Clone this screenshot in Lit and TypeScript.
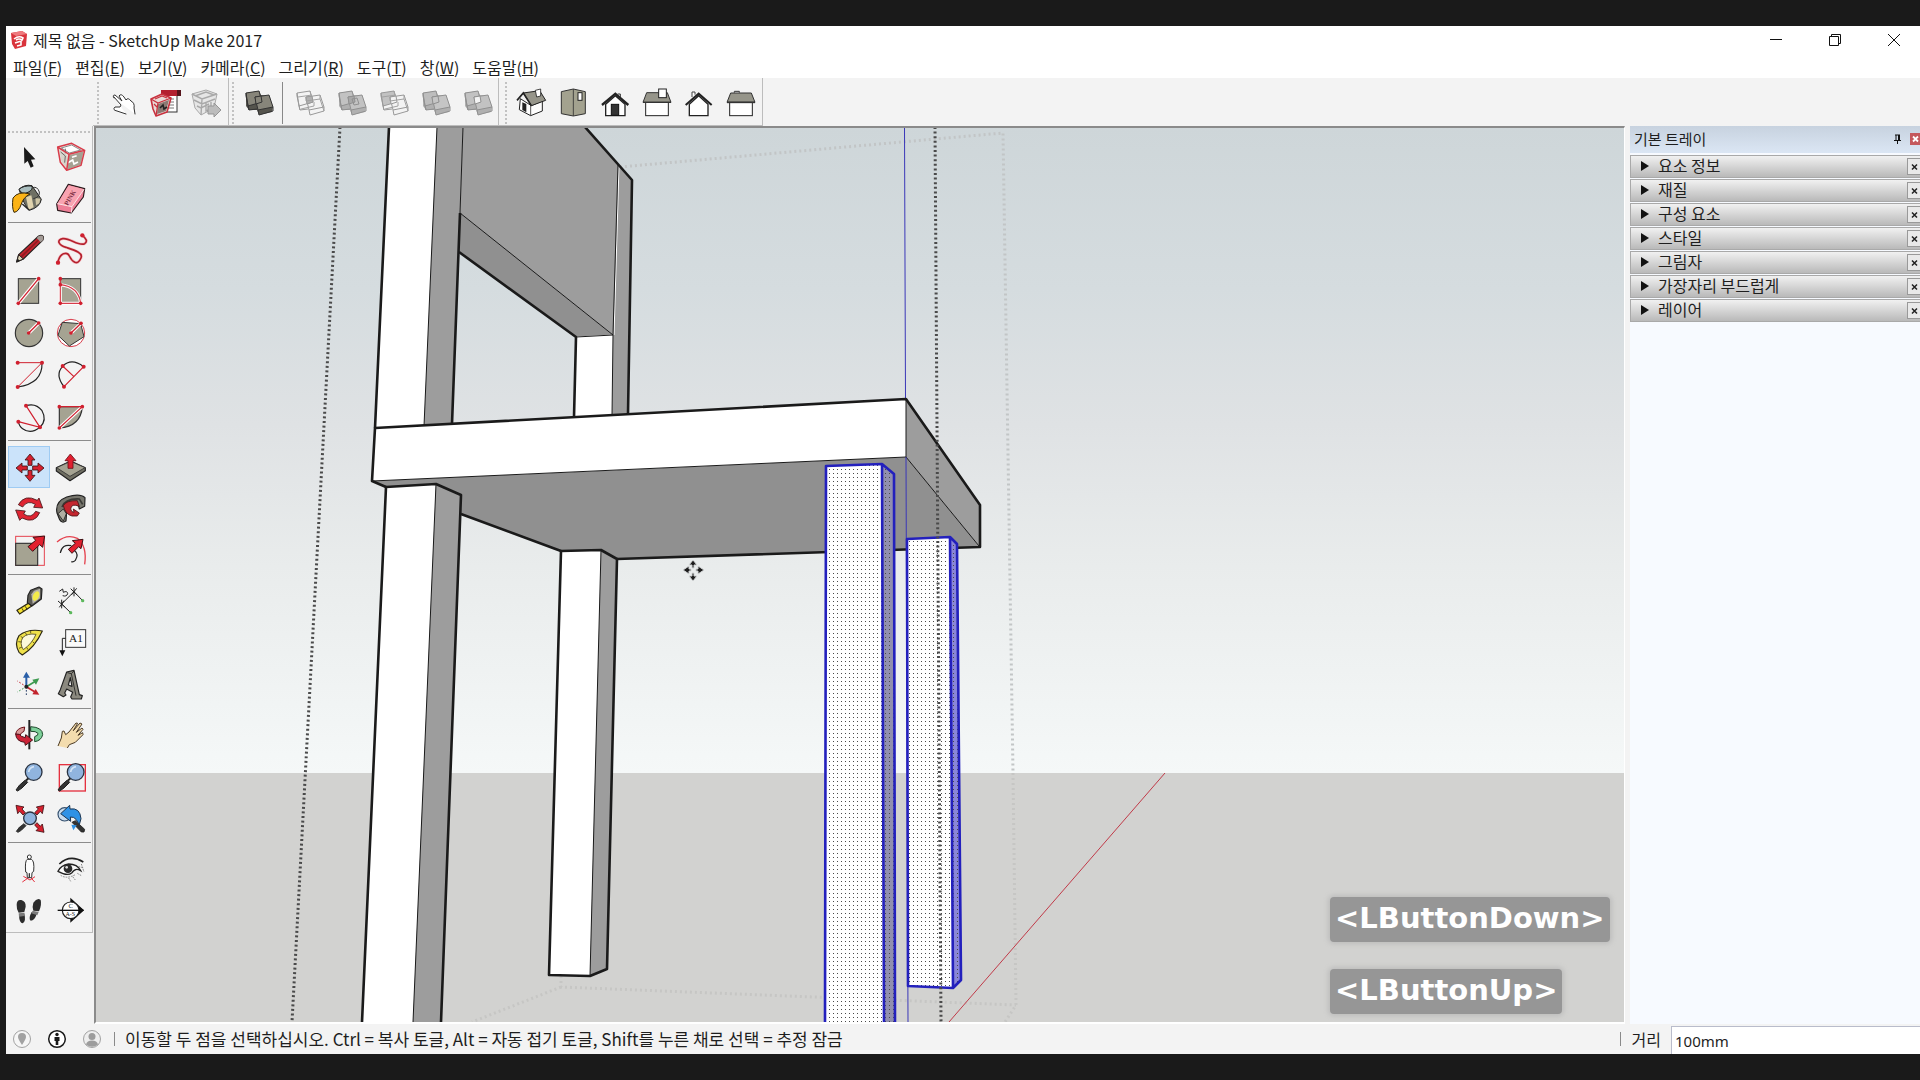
import { LitElement, html, svg, css, type SVGTemplateResult } from "lit";
import { customElement, property } from "lit/decorators.js";
import { classMap } from "lit/directives/class-map.js";

interface Tool {
  name: string;
  box: string;
  art: SVGTemplateResult;
  active?: boolean;
}

const RED = "#d0202f";

const dots = (pts: number[][], r = 5.5) =>
  pts.map(([x, y]) => svg`<circle cx=${x} cy=${y} r=${r} fill=${RED} />`);

/* Palette artwork lives on a sheet drawn at three units per pixel; each tool names its 126 unit cell. */
const palette: Tool[][] = [
  [
    {
      name: "선택", box: "24 48 126 126",
      art: svg`<path d="M72 81 L73 131 L83 123 L92 143 L101 139 L93 119 L106 118 Z" fill="#1a1a1a"/>`,
    },
    {
      name: "구성 요소 만들기", box: "150 48 126 126",
      art: svg`<path d="M173 81 L215 70 L254 91 L243 136 L200 151 L181 127 Z" fill="#ece9e6"/>
        <path d="M206 106 L251 94 L242 134 L202 149 Z" fill="#a5a193"/>
        <path d="M178 88 L203 107 L200 146 L184 124 Z" fill="#d8d4ca"/>
        <path d="M184 84 L215 75 L242 90 L208 99 Z" fill="#fff" stroke="#555" stroke-width="2"/>
        <path d="M204 128 l14 -8 l4 12 l12 -6 M216 112 l14 -5" fill="none" stroke="#fff" stroke-width="5"/>
        <path d="M182 96 L196 108 L194 128 M196 86 V100" fill="none" stroke="#555" stroke-width="2.5"/>
        <path d="M173 81 L215 70 L254 91 L243 136 L200 151 L181 127 Z M173 81 L207 103 L254 91 M207 103 L200 151" fill="none" stroke="#d83c4a" stroke-width="4.5" stroke-linejoin="round"/>`,
    },
    {
      name: "페인트 통", box: "24 174 126 126",
      art: svg`<path d="M57 208 Q74 192 96 197 L124 238 Q120 262 88 271 Q72 256 57 208 Z" fill="#6f7064" stroke="#222" stroke-width="3"/>
        <path d="M57 208 Q70 196 95 198 Q101 208 84 217 Q66 226 57 208 Z" fill="#a9bdbe" stroke="#222" stroke-width="3"/>
        <path d="M78 232 L94 226 L101 262 L86 269 Z" fill="#e0d3ae"/><path d="M106 234 L121 236 L118 250 L108 256 Z" fill="#cfc6a6"/>
        <path d="M98 203 Q112 198 118 216 Q120 232 100 236" fill="none" stroke="#333" stroke-width="3"/>
        <path d="M39 234 Q54 212 90 222 Q70 232 64 252 Q56 276 42 277 Q35 262 39 234 Z" fill="#fbb316" stroke="#3a2a08" stroke-width="3"/>
        <path d="M67 252 L88 271" stroke="#222" stroke-width="4"/>`,
    },
    {
      name: "지우개", box: "150 174 126 126",
      art: svg`<path d="M170 252 L205 193 L254 206 L250 231 L214 279 L173 271 Z" fill="#ee7f97" stroke="#2a1a1c" stroke-width="3.5" stroke-linejoin="round"/>
        <path d="M172 251 L206 196 L252 208 L216 260 Z" fill="#f9a3b1"/>
        <path d="M172 251 L216 260 L252 208 M216 260 L214 278" fill="none" stroke="#fbe3e6" stroke-width="3"/>
        <text x="188" y="244" font-size="20" font-weight="bold" fill="#7d3044" font-family="Liberation Serif, serif" transform="rotate(-60 208 238)">PINK</text>`,
    },
  ],
  [
    {
      name: "선", box: "24 324 126 126",
      art: svg`<path d="M50 426 L56 404 L116 348 Q125 344 130 350 Q131 356 128 361 L70 417 Z" fill="#c2232c" stroke="#26211f" stroke-width="3.5" stroke-linejoin="round"/>
        <path d="M64 410 L122 354" stroke="#8e1a20" stroke-width="5"/>
        <path d="M110 354 L116 348 Q126 344 130 350 Q131 356 128 361 L122 367 Z" fill="#a39b96"/>
        <path d="M50 426 L56 404 L70 417 Z" fill="#dcd2b4" stroke="#26211f" stroke-width="3"/><path d="M49 427 L53 416 L60 422 Z" fill="#222"/>`,
    },
    {
      name: "자유형", box: "150 324 126 126",
      art: svg`<path d="M247 346 Q267 362 254 371 C236 380 208 352 188 356 C168 360 176 376 198 382 C222 390 250 398 243 414 C232 440 216 424 208 408 C202 394 178 398 174 428" fill="none" stroke="#f6c9cd" stroke-width="9"/>
        <path d="M247 346 Q267 362 254 371 C236 380 208 352 188 356 C168 360 176 376 198 382 C222 390 250 398 243 414 C232 440 216 424 208 408 C202 394 178 398 174 428" fill="none" stroke="#b5202d" stroke-width="5"/>${dots([[247, 346], [174, 428]], 6.5)}`,
    },
    {
      name: "사각형", box: "24 450 126 126",
      art: svg`<rect x="55" y="476" width="61" height="74" fill="#a5a392" stroke="#333" stroke-width="3"/>
        <path d="M55 550 L116 476" stroke="#fff" stroke-width="11"/><path d="M55 550 L116 476" stroke=${RED} stroke-width="4"/>${dots([[55, 550], [116, 476]])}`,
    },
    {
      name: "회전된 사각형", box: "150 450 126 126",
      art: svg`<rect x="181" y="476" width="61" height="74" fill="#a5a392" stroke="#333" stroke-width="3"/>
        <path d="M181 494 V550 H242 Q236 500 181 494" fill="none" stroke="#fff" stroke-width="9"/>
        <path d="M181 478 V550 H242 Q236 500 181 494" fill="none" stroke="#d83c4a" stroke-width="3.5"/>${dots([[181, 476], [181, 494], [181, 550], [242, 550]])}`,
    },
    {
      name: "원", box: "24 576 126 126",
      art: svg`<circle cx="87" cy="639" r="41" fill="#a5a392" stroke="#333" stroke-width="3.5"/>
        <path d="M86 639 L116 609" stroke="#fff" stroke-width="11"/><path d="M86 639 L116 609" stroke=${RED} stroke-width="4"/>${dots([[86, 639], [116, 609]])}`,
    },
    {
      name: "다각형", box: "150 576 126 126",
      art: svg`<circle cx="213" cy="639" r="41" fill="#fff" stroke="#d83c4a" stroke-width="3"/>
        <path d="M187 607 L242 611 L252 650 L208 678 L174 646 Z" fill="#a5a392" stroke="#333" stroke-width="3"/>
        <path d="M213 639 L243 610" stroke="#fff" stroke-width="10"/><path d="M213 639 L243 610" stroke=${RED} stroke-width="4"/>${dots([[213, 639], [243, 610]])}`,
    },
    {
      name: "호", box: "24 702 126 126",
      art: svg`<path d="M126 728 Q128 790 53 801" fill="none" stroke="#222" stroke-width="3.5"/>
        <path d="M53 728 H126 L53 801" fill="none" stroke=${RED} stroke-width="3"/>${dots([[53, 728], [126, 728], [53, 801]], 6)}`,
    },
    {
      name: "두 점 호", box: "150 702 126 126",
      art: svg`<path d="M192 800 Q164 764 188 739 Q214 712 251 740" fill="none" stroke="#222" stroke-width="3.5"/>
        <path d="M192 800 L251 740 M188 738 L221 769" fill="none" stroke=${RED} stroke-width="3.5"/>${dots([[192, 800], [251, 740], [188, 738]], 6)}`,
    },
    {
      name: "세 점 호", box: "24 828 126 126",
      art: svg`<path d="M78 857 Q108 848 126 872 Q142 900 120 922 Q92 944 68 926 Q58 920 55 905" fill="none" stroke="#222" stroke-width="3.5"/>
        <path d="M78 857 L120 922 L55 905" fill="none" stroke=${RED} stroke-width="3.5"/>${dots([[78, 857], [120, 922], [55, 905]], 6)}`,
    },
    {
      name: "부채꼴", box: "150 828 126 126",
      art: svg`<path d="M178 860 H247 Q242 920 178 924 Z" fill="#a5a392" stroke="#333" stroke-width="3.5"/>
        <path d="M247 860 L178 924" stroke="#fff" stroke-width="10"/>
        <path d="M178 860 H247 L178 924" fill="none" stroke=${RED} stroke-width="3.5"/>${dots([[178, 860], [247, 860], [178, 924]])}`,
    },
  ],
  [
    {
      name: "이동", box: "24 33 126 126", active: true,
      art: svg`<path d="M90 57 L105 75 H96 V91 L84 91 V75 H75 Z M90 139 L105 121 H96 V106 H84 V121 H75 Z M48 99 L66 84 V93 H82 V105 H66 V114 Z M132 99 L114 84 V93 H98 V105 H114 V114 Z" fill="#d6202e" stroke="#3a1416" stroke-width="2.5" stroke-linejoin="round"/>`,
    },
    {
      name: "밀기/끌기", box: "150 33 126 126",
      art: svg`<path d="M169 98 L212 78 L256 98 L256 107 L210 137 L169 108 Z" fill="#6f6e62" stroke="#222" stroke-width="3.5" stroke-linejoin="round"/>
        <path d="M170 98 L212 79 L255 98 L210 124 Z" fill="#a5a392" stroke="#333" stroke-width="2.5"/>
        <path d="M211 57 L228 77 H219 V100 H204 V77 H195 Z" fill="#e01f2f" stroke="#6b1017" stroke-width="2.5"/>`,
    },
    {
      name: "회전", box: "24 159 126 126",
      art: svg`<path d="M55 209 Q74 176 112 196 L117 189 L128 219 L101 217 L106 208 Q82 194 68 216 Z" fill="#df2432" stroke="#45191c" stroke-width="2.5" stroke-linejoin="round"/>
        <path d="M119 233 Q104 268 66 249 L59 256 L47 225 L76 228 L71 237 Q94 252 107 229 Z" fill="#df2432" stroke="#45191c" stroke-width="2.5" stroke-linejoin="round"/>`,
    },
    {
      name: "따라가기", box: "150 159 126 126",
      art: svg`<path d="M171 234 Q164 200 200 186 Q240 174 255 188 L254 214 L238 222 Q236 202 214 204 Q196 210 200 232 L198 258 Q186 266 179 254 Z" fill="#77766d" stroke="#222" stroke-width="3.5" stroke-linejoin="round"/>
        <path d="M186 216 Q196 190 238 192 L248 208" fill="none" stroke="#3a3a36" stroke-width="5"/>
        <path d="M174 236 L190 222 L199 236 L190 258 Z" fill="#b0aea2" stroke="#222" stroke-width="2.5"/>
        <path d="M190 212 Q198 196 232 197 L238 214 Q214 204 212 222 Q214 232 222 232 L220 222 L238 234 L232 243 L216 243 Q196 238 190 212 Z" fill="#c4262f" stroke="#4a1215" stroke-width="2.5"/>`,
    },
    {
      name: "배율", box: "24 285 126 126",
      art: svg`<rect x="47" y="304" width="86" height="87" fill="none" stroke="#e5434f" stroke-width="3"/>
        <rect x="47" y="325" width="66" height="66" fill="#a5a392" stroke="#333" stroke-width="3.5"/>
        <path d="M134 303 L128 337 L119 329 L98 349 L84 335 L107 316 L99 307 Z" fill="#e2202f" stroke="#3d1013" stroke-width="3" stroke-linejoin="round"/>`,
    },
    {
      name: "오프셋", box: "150 285 126 126",
      art: svg`<path d="M171 321 Q200 296 232 310 Q262 334 254 388" fill="none" stroke="#e5434f" stroke-width="4"/>
        <path d="M181 354 Q186 326 214 332 M222 345 Q238 358 226 376 Q220 382 214 380" fill="none" stroke="#222" stroke-width="3.5"/>
        <path d="M249 313 L243 341 L236 335 L216 355 L205 343 L226 325 L217 317 Z" fill="#e2202f" stroke="#3d1013" stroke-width="3" stroke-linejoin="round"/>`,
    },
  ],
  [
    {
      name: "줄자", box: "24 435 126 126",
      art: svg`<path d="M51 526 L88 503 L94 514 L59 537 Z" fill="#f4e02f" stroke="#2b2712" stroke-width="3.5"/>
        <path d="M66 520 l5 9 M76 514 l5 9" stroke="#2b2712" stroke-width="2.5"/>
        <path d="M84 481 L92 466 L117 456 L126 462 L124 492 L96 513 L82 503 Z" fill="#5c5b55" stroke="#222" stroke-width="3.5" stroke-linejoin="round"/>
        <path d="M94 478 L102 467 L120 461 L120 490 L98 506 Z" fill="#b6b4aa"/>
        <ellipse cx="108" cy="483" rx="9" ry="15" fill="#f4ec4a" transform="rotate(25 108 483)"/>`,
    },
    {
      name: "치수", box: "150 435 126 126",
      art: svg`<path d="M185 507 L222 470 L248 497 M185 507 L212 533" fill="none" stroke="#222" stroke-width="3"/>
        <path d="M174 498 L196 517 M178 517 L192 497 M185 494 V520 M212 461 L231 480 M214 480 L230 460 M222 457 V484" stroke="#222" stroke-width="3"/>
        <path d="M178 469 L188 462 L190 472 Q202 466 203 476 Q200 486 188 482" fill="none" stroke="#222" stroke-width="3"/>
        <circle cx="248" cy="497" r="5" fill="#5cb85c"/><circle cx="212" cy="533" r="5" fill="#5cb85c"/>`,
    },
    {
      name: "각도기", box: "24 561 126 126",
      art: svg`<path d="M127 588 Q84 580 57 602 Q42 626 57 652 L67 660 Q104 638 127 588 Z" fill="#efe14a" stroke="#2b2712" stroke-width="3.5" stroke-linejoin="round"/>
        <path d="M108 598 Q82 594 68 608 Q58 626 70 644 Q96 626 108 598 Z" fill="#fbf8dc" stroke="#4d4620" stroke-width="2.5"/>
        <path d="M92 588 v7 M76 593 l4 7 M62 604 l7 5 M55 620 l9 1 M57 640 l9 -4 M84 644 l-4 -7 M104 626 l-6 -6" stroke="#4d4620" stroke-width="2.5"/>`,
    },
    {
      name: "텍스트", box: "150 561 126 126",
      art: svg`<rect x="197" y="584" width="60" height="53" fill="#fafafa" stroke="#333" stroke-width="3"/>
        <text x="228" y="620" font-size="34" text-anchor="middle" fill="#222" font-family="Liberation Serif, serif">A1</text>
        <path d="M197 610 H187 V650" fill="none" stroke="#222" stroke-width="3"/><path d="M178 646 H196 L187 664 Z" fill="#111"/>`,
    },
    {
      name: "축", box: "24 687 126 126",
      art: svg`<path d="M79 755 V722" stroke="#2a5fa8" stroke-width="6"/><path d="M79 710 L90 728 H69 Z" fill="#2a5fa8"/>
        <path d="M79 755 L104 740" stroke="#3d9a50" stroke-width="5"/><path d="M118 730 L108 749 L97 734 Z" fill="#3d9a50"/>
        <path d="M79 755 L104 770" stroke="#c2232c" stroke-width="5"/><path d="M118 779 L97 778 L107 762 Z" fill="#c2232c"/>
        <path d="M79 755 V785" stroke="#2a3f68" stroke-width="3" stroke-dasharray="5 5"/><path d="M79 755 L52 738" stroke="#c2232c" stroke-width="3" stroke-dasharray="5 5"/>
        <path d="M79 755 L52 771" stroke="#3d9a50" stroke-width="3" stroke-dasharray="5 5"/><circle cx="79" cy="755" r="6" fill="#222"/>`,
    },
    {
      name: "3D 텍스트", box: "150 687 126 126",
      art: svg`<path d="M175 776 L181 764 L200 711 L222 706 L238 779 L247 782 L244 792 L216 792 L212 786 L218 772 L200 762 L194 774 L198 780 L190 785 Z M205 750 L216 754 L211 728 Z" fill="#8b897f" fill-rule="evenodd" stroke="#222" stroke-width="3.5" stroke-linejoin="round"/>
        <path d="M202 713 L214 716 L228 782 M214 716 L222 708" fill="none" stroke="#222" stroke-width="2.5"/>`,
    },
  ],
  [
    {
      name: "궤도", box: "24 12 126 126",
      art: svg`<path d="M92 50 Q128 52 128 74 Q124 92 104 95 L104 80 Q116 76 114 70 Q108 63 92 64 Z" fill="#7ed09a" stroke="#1d4a2c" stroke-width="3"/>
        <path d="M72 64 L74 51 Q50 54 47 72 L60 76 Q62 68 72 64 Z" fill="#d99a9a" stroke="#6b1017" stroke-width="3"/>
        <path d="M88 30 V118" stroke="#222" stroke-width="6"/>
        <path d="M47 72 Q48 94 74 97 L76 106 L98 90 L77 74 L76 83 Q62 80 58 73 Z" fill="#cc2237" stroke="#4a1018" stroke-width="3"/>`,
    },
    {
      name: "이동 보기", box: "150 12 126 126",
      art: svg`<path d="M174 108 L184 84 L187 64 L192 63 L197 74 L207 66 L228 39 L233 40 L220 62 L240 39 L246 42 L229 67 L246 54 L249 58 L234 76 L248 68 L249 74 L226 97 L208 104 L202 114" fill="#f3dcae" stroke="#4b3a24" stroke-width="3" stroke-linejoin="round"/>`,
    },
    {
      name: "확대/축소", box: "24 138 126 126",
      art: svg`<path d="M48 240 L58 226 L76 210 L83 217 L66 234 L53 243 Z" fill="#333" stroke="#222" stroke-width="3"/>
        <path d="M78 212 L86 204" stroke="#222" stroke-width="6"/><circle cx="101" cy="186" r="25" fill="#90b4de" stroke="#2b3442" stroke-width="4"/>
        <path d="M86 186 Q88 172 102 170" fill="none" stroke="#d4e4f5" stroke-width="5"/>`,
    },
    {
      name: "확대/축소 창", box: "150 138 126 126",
      art: svg`<rect x="178" y="164" width="78" height="79" fill="none" stroke="#e5313f" stroke-width="4"/>
        <path d="M174 240 L184 226 L202 210 L209 217 L192 234 L179 243 Z" fill="#333" stroke="#222" stroke-width="3"/>
        <path d="M204 212 L212 204" stroke="#222" stroke-width="6"/><circle cx="227" cy="186" r="25" fill="#90b4de" stroke="#2b3442" stroke-width="4"/>
        <path d="M212 186 Q214 172 228 170" fill="none" stroke="#d4e4f5" stroke-width="5"/>`,
    },
    {
      name: "범위 확대/축소", box: "24 264 126 126",
      art: svg`<path d="M48 286 L72 291 L66 297 L76 308 L69 315 L59 304 L53 311 Z M132 286 L109 291 L115 297 L104 308 L111 315 L121 304 L127 311 Z M132 367 L127 342 L121 349 L111 338 L104 345 L114 356 L108 362 Z" fill="#d6202e" stroke="#3d1013" stroke-width="2.5"/>
        <path d="M49 364 L58 352 L72 341 L78 347 L64 361 L54 367 Z" fill="#333" stroke="#222" stroke-width="2.5"/>
        <circle cx="90" cy="325" r="19" fill="#90b4de" stroke="#2b3442" stroke-width="4"/>`,
    },
    {
      name: "이전 보기", box: "150 264 126 126",
      art: svg`<circle cx="194" cy="313" r="20" fill="#c9dcee" stroke="#35506e" stroke-width="3.5"/>
        <path d="M216 337 L226 332 L254 358 L252 366 L244 366 Z" fill="#333" stroke="#222" stroke-width="2.5"/>
        <path d="M182 311 L209 286 L210 297 Q240 292 243 326 L238 344 L228 328 Q222 320 211 321 L212 334 Z" fill="#2f92e6" stroke="#1d3550" stroke-width="3" stroke-linejoin="round"/>
        <path d="M214 344 L220 361 L230 346 Z" fill="#2f92e6"/>`,
    },
  ],
  [
    {
      name: "카메라 배치", box: "24 414 126 126",
      art: svg`<path d="M67 516 L90 500 L104 516 M70 499 L90 510 L105 500" fill="none" stroke="#e5313f" stroke-width="3"/>
        <path d="M82 448 Q74 452 77 486 L81 488 L82 503 H88 V490 V503 H95 L96 488 L101 484 Q104 452 94 448 Z" fill="#fdfdfd" stroke="#333" stroke-width="3"/>
        <circle cx="88" cy="441" r="6" fill="#fdfdfd" stroke="#333" stroke-width="3"/>`,
    },
    {
      name: "둘러보기", box: "150 414 126 126",
      art: svg`<path d="M178 462 Q210 432 250 456" fill="none" stroke="#222" stroke-width="5"/>
        <path d="M174 484 Q182 466 206 462 Q232 462 242 482 Q226 472 216 488 Q202 500 174 484 Z" fill="#fafafa" stroke="#222" stroke-width="4"/>
        <circle cx="204" cy="476" r="13" fill="#2a2a2a"/><circle cx="200" cy="472" r="4" fill="#ddd"/>
        <path d="M182 496 Q200 508 226 494 M206 504 L212 514 M218 500 L226 510 M232 490 L246 498 M236 470 L252 474 M244 462 l8 24" stroke="#888" stroke-width="3" fill="none" stroke-dasharray="5 3"/>`,
    },
    {
      name: "걷기", box: "24 540 126 126",
      art: svg`<path d="M50 584 Q50 568 64 570 Q78 574 77 590 L73 606 L56 608 Q49 596 50 584 Z M57 616 L73 612 Q79 634 68 640 Q58 640 57 616 Z M100 578 Q112 562 122 570 Q126 584 117 604 L100 602 Q96 590 100 578 Z M95 606 L110 612 Q104 632 92 632 Q84 626 95 606 Z" fill="#2d2d2d"/>
        <path d="M56 610 L74 608 L73 618 L57 620 Z M98 602 L116 606 L112 616 L94 610 Z" fill="#7b7b7b"/>`,
    },
    {
      name: "단면 평면", box: "150 540 126 126",
      art: svg`<path d="M211 563 L252 601 L211 638 Z" fill="#111"/><circle cx="212" cy="601" r="25" fill="#fff" stroke="#222" stroke-width="3.5"/>
        <path d="M173 601 H250" stroke="#111" stroke-width="4"/><path d="M237 590 L252 601 L237 612 Z" fill="#111"/>
        <text x="212" y="595" font-size="20" text-anchor="middle" fill="#222" font-family="Liberation Serif, serif">C</text>
        <text x="211" y="618" font-size="18" text-anchor="middle" fill="#222" font-family="Liberation Serif, serif">A-S</text>`,
    },
  ],
];

/* Two overlapping slabs; the boolean tools differ only in which part is solid. */
const slabs = (line: string, left: string, right: string, mid: string, side: string) => svg`
  <path d="M9 11 L22 9 L24 13 L32 14 L36 25 L35 30 L22 33 L20 28 L12 28 L9 24 Z" fill=${side} />
  <path d="M9 11 L22 9 L25 20 L11 24 Z" fill=${left} stroke=${line} />
  <path d="M18 15 L32 13 L36 25 L21 28 Z" fill=${right} stroke=${line} />
  <path d="M18 15 L24 14 L25 20 L19 22 Z" fill=${mid} stroke=${line} />
  <path d="M9 11 V14 L12 28 L20 27 M11 24 L12 28 M21 28 L22 33 L36 29 V25" fill="none" stroke=${line} stroke-linejoin="round" />`;

/* Wire edges of the hidden half of a slab. */
const wires = svg`<path d="M22 9 L23 13 M10 15 L24 13 M26 20 V24 L13 27 M18 15 V19 L32 17 L36 29 M32 13 V17" fill="none" stroke="#a2a2a2" />`;

const B = "0 0 42 42";

const bars: Tool[][][] = [
  [[
    {
      name: "만지기", box: B,
      art: svg`<path d="M12 16 Q10 13 13 13 L20 19 L17 14 Q19 11 22 15 L24 18 Q26 15 29 19 Q33 21 32 26 L33 32 M12 15 L19 23 L18 25 L13 25 Q10 28 15 29 L24 32" fill="#fff" stroke="#333" stroke-linecap="round" stroke-linejoin="round"/>`,
    },
    {
      name: "3D 웨어하우스", box: B,
      art: svg`<rect x="21" y="13" width="12" height="17" fill="#fff" stroke="#333"/>
        <path d="M24 17 h6 M24 20 h6 M24 23 h6 M24 26 h6" stroke="#777"/>
        <rect x="17" y="8" width="20" height="6" fill="#b3202f"/><path d="M33 8 h4 v6 h-4 z" fill="#55141b"/>
        <path d="M7 17 L18 12 L27 16 L23 30 L12 34 L9 27 Z" fill="#e8dcd8" stroke="#c8323f" stroke-width="1.6" stroke-linejoin="round"/>
        <path d="M14 22 L25 18 L22 29 L13 32 Z" fill="#8c7a74"/><path d="M7 17 L14 21 L27 16 M14 21 L12 34 M11 17 L18 14 L23 16 M10 22 L13 25" fill="none" stroke="#c8323f" stroke-width="1.3"/>
        <path d="M16 26 l3 -3 l1 4 l3 -2" fill="none" stroke="#222" stroke-width="1.6"/>`,
    },
    {
      name: "모델 공유", box: B,
      art: svg`<path d="M6 12 L20 8 L31 12 L28 26 L15 33 L9 26 Z" fill="#e6e6e6" stroke="#a9a9a9" stroke-linejoin="round"/>
        <path d="M6 12 L16 17 L31 12 M16 17 L15 33 M9 14 L20 10 L28 13 M8 18 L16 22 L29 17 M11 24 l4 2 l8 -4 M20 21 v8 l5 -2 v-7" fill="none" stroke="#a9a9a9" stroke-width="1.4"/>
        <path d="M22 24 H28 V21 L35 28 L28 35 V32 H22 Z" fill="#bcbcbc" stroke="#959595"/>`,
    },
  ]],
  [[
    { name: "외부 쉘", box: B, art: slabs("#333", "#87857a", "#87857a", "#87857a", "#55544d") },
  ], [
    { name: "교차", box: B, art: svg`${slabs("#999", "none", "none", "#b0b0b0", "none")}${wires}` },
    { name: "합치기", box: B, art: svg`${slabs("#909090", "#c2c2c2", "#c2c2c2", "#a8a8a8", "#b0b0b0")}<path d="M22 17 l5 -1 l2 6 l-5 1 z" stroke="#909090" />` },
    { name: "빼기", box: B, art: svg`${slabs("#999", "#c2c2c2", "#f3f3f3", "#f3f3f3", "none")}${wires}` },
    { name: "자르기", box: B, art: slabs("#909090", "#bdbdbd", "#c5c5c5", "#c5c5c5", "#b0b0b0") },
    { name: "나누기", box: B, art: slabs("#909090", "#c2c2c2", "#c2c2c2", "#f3f3f3", "#b0b0b0") },
  ]],
  [[
    {
      name: "등각", box: "60 21 126 126",
      art: svg`<path d="M91 71 L88 104 L122 122 L157 108 V78 L124 92 Z" fill="#fdfdfd" stroke="#222" stroke-width="3"/>
        <path d="M122 90 V122" stroke="#333" stroke-width="2.5"/><path d="M97 82 L109 87 V112 L97 105 Z" fill="#222"/>
        <path d="M100 54 L149 47 L167 76 L124 92 Z" fill="#96958a" stroke="#222" stroke-width="3"/>
        <path d="M81 76 L100 54 L124 92" fill="none" stroke="#222" stroke-width="5"/>
        <path d="M136 46 L152 42 L152 63 L140 66 Z" fill="#fff" stroke="#222" stroke-width="2.5"/>`,
    },
    {
      name: "평면", box: "186 21 126 126",
      art: svg`<path d="M214 50 L250 42 L286 50 V116 L250 123 L214 116 Z" fill="#a3a28f" stroke="#333" stroke-width="3"/>
        <path d="M250 42 V123" stroke="#333" stroke-width="2.5"/><rect x="264" y="53" width="12" height="23" fill="#fff" stroke="#222" stroke-width="3"/>`,
    },
    {
      name: "정면", box: "312 21 126 126",
      art: svg`<path d="M347 88 L376 62 L405 88 V122 H347 Z" fill="#fff" stroke="#222" stroke-width="4"/><path d="M336 90 L376 56 L415 90" fill="none" stroke="#222" stroke-width="7"/>
        <rect x="364" y="88" width="22" height="33" fill="#333" stroke="#111" stroke-width="3"/><path d="M383 57 h8 v10" fill="none" stroke="#333" stroke-width="3"/>`,
    },
    {
      name: "오른쪽", box: "438 21 126 126",
      art: svg`<rect x="467" y="82" width="68" height="40" fill="#fff" stroke="#222" stroke-width="3"/><path d="M470 53 H532 L543 82 H459 Z" fill="#96958a" stroke="#333" stroke-width="3"/>
        <path d="M459 82 H543" stroke="#333" stroke-width="4"/><rect x="506" y="42" width="23" height="26" fill="#fff" stroke="#222" stroke-width="3"/>`,
    },
    {
      name: "뒷면", box: "564 21 126 126",
      art: svg`<path d="M598 88 L626 62 L654 88 V122 H598 Z" fill="#fff" stroke="#222" stroke-width="4"/><path d="M606 66 V51 h9 v8" fill="#fff" stroke="#444" stroke-width="3"/>
        <path d="M587 90 L626 56 L665 90" fill="none" stroke="#222" stroke-width="6"/>`,
    },
    {
      name: "왼쪽", box: "690 21 126 126",
      art: svg`<rect x="719" y="82" width="68" height="40" fill="#fff" stroke="#222" stroke-width="3"/><path d="M722 54 H784 L795 82 H711 Z" fill="#96958a" stroke="#333" stroke-width="3"/>
        <path d="M711 82 H795" stroke="#333" stroke-width="5"/><path d="M733 53 v-4 h15 v4" fill="none" stroke="#333" stroke-width="3"/>`,
    },
  ]],
];

@customElement("tool-button")
class ToolButton extends LitElement {
  @property({ attribute: false }) tool!: Tool;

  static styles = css`
    :host { display: block; }
    button {
      display: block; width: 42px; height: 42px; padding: 0;
      border: 1px solid transparent; background: none;
    }
    button.active { background: #cbe3fa; border-color: #9ecbf3; }
    svg { display: block; width: 42px; height: 42px; margin: -1px; }
  `;

  render() {
    const t = this.tool;
    return html`<button class=${classMap({ active: !!t.active })} aria-label=${t.name} aria-pressed=${t.active ? "true" : "false"}>
      <svg viewBox=${t.box} fill="none" aria-hidden="true">${t.art}</svg>
    </button>`;
  }
}

/* The chair model, in window coordinates. */
@customElement("model-view")
class ModelView extends LitElement {
  static styles = css`
    :host { display: block; min-width: 0; min-height: 0; overflow: hidden; }
    svg { display: block; width: 100%; height: 100%; }
    .white { fill: #fff; }
    .side { fill: #9d9d9d; }
    .under { fill: #909090; }
    .profile { fill: none; stroke: #1a1a1a; stroke-width: 2.6; stroke-linejoin: round; }
    .edge { fill: none; stroke: #1a1a1a; stroke-width: 1; }
    .picked { fill: none; stroke: #2320bd; stroke-width: 2.6; stroke-linejoin: round; }
    .guide { fill: none; stroke: #4a4a4a; stroke-width: 3; stroke-dasharray: 2 2.6; }
    .faint { fill: none; stroke: #c2c5c6; stroke-width: 3; stroke-dasharray: 2 3; }
    .ground { stroke: #c6c6c4; }
  `;

  render() {
    return html`<svg viewBox="96 128 1528 894" preserveAspectRatio="xMinYMin slice" role="img" aria-label="의자 모델">
      <defs>
        <linearGradient id="sky" x1="0" y1="0" x2="0" y2="1">
          <stop offset="0" stop-color="#ced6d9" />
          <stop offset="0.25" stop-color="#d5dcdf" />
          <stop offset="0.46" stop-color="#dfe2e4" />
          <stop offset="0.68" stop-color="#e9ecec" />
          <stop offset="1" stop-color="#f5f8f8" />
        </linearGradient>
        <pattern id="stipple" width="4" height="4" patternUnits="userSpaceOnUse">
          <rect x="1" y="1" width="1" height="1" fill="#4a4a4a" />
        </pattern>
      </defs>
      <rect x="95" y="127" width="4000" height="646" fill="url(#sky)" />
      <rect x="95" y="773" width="4000" height="2000" fill="#d2d2d0" />

      <path class="faint" d="M620 167 L1003 133 L1013 773" />
      <path class="faint ground" d="M1013 773 L1016 1005 L1005 1022 M561 976 V987 L1016 1005 M561 987 L472 1022" />
      <path d="M1165 773 L949 1022" stroke="#c03a48" stroke-width="1" />
      <path d="M904.5 127 L905.5 399" stroke="#3a37b8" stroke-width="1" />
      <path class="guide" d="M340 127 L292 1022" />

      <path class="side" d="M463 127 H585 L632 180 L628 414 L612 415 L613 335 L460 213 Z" />
      <path class="under" d="M460 213 L613 335 L576 337 L459 252 Z" />
      <path class="white" d="M576 337 L613 335 L612 417 L574 419 Z" />
      <path d="M619 165 L614 335 M576 337 L613 335" stroke="#fff" stroke-width="1" />
      <path class="edge" d="M618 165 L613 335 L612 416 M460 213 L613 335 L576 337" />
      <path class="profile" d="M585 127 L632 180 L628 414 M459 252 L576 337 L574 417" />

      <path class="white" d="M389 127 H437 L424 428 H375 Z" />
      <path class="side" d="M437 127 H463 L452 427 H424 Z" />
      <path class="edge" d="M437 127 L424 426 M463 127 L460 213" />
      <path class="profile" d="M389 127 L375 428 M460 213 L452 424" />

      <path class="under" d="M372 481 L906 457 L980 547 L617 559 L561 551 L461 514 L386 487 Z" />
      <path class="side" d="M906 399 L980 505 V547 L906 457 Z" />
      <path class="white" d="M375 428 L906 399 V457 L372 481 Z" />
      <path class="edge" d="M372 481 L906 457 L979 546 M906 399 V457" />
      <path class="profile" d="M386 487 L372 481 L375 428 L906 399 L980 505 V547 L617 559 M561 551 L461 514" />

      <path class="white" d="M386 487 L436 484 L413 1022 H362 Z" />
      <path class="side" d="M436 484 L461 495 L441 1022 H413 Z" />
      <path class="edge" d="M436 484 L413 1022" />
      <path class="profile" d="M362 1022 L386 487 L436 484 L461 495 L441 1022" />

      <path class="white" d="M561 551 L601 550 L590 976 L549 975 Z" />
      <path class="side" d="M601 550 L617 559 L607 969 L590 976 Z" />
      <path class="edge" d="M601 550 L590 976" />
      <path class="profile" d="M601 550 L561 551 L549 975 L590 976 L607 969 L617 559 Z" />

      <path class="white" d="M826 466 L882 464 L884 1022 H825 Z" />
      <path d="M882 464 L894 474 L895 1022 H884 Z" fill="#918fae" />
      <path d="M826 466 L882 464 L894 474 L895 1022 H825 Z" fill="url(#stipple)" />
      <path class="picked" d="M825 1022 L826 466 L882 464 L894 474 L895 1022 M882 464 L884 1022" />

      <path d="M906 457 L908 1022" stroke="#3a37b8" stroke-width="1" />
      <path class="white" d="M906 539 L950 537 L953 988 L908 986 Z" />
      <path d="M950 537 L957 544 L961 980 L953 988 Z" fill="#8a86d8" />
      <path d="M906 539 L950 537 L957 544 L961 980 L953 988 L908 986 Z" fill="url(#stipple)" />
      <path class="picked" d="M950 537 L957 544 L961 980 L953 988 L908 986 L907 539 L950 537 L953 988" />
      <path class="guide" d="M935 127 L941 1022" />

      <g fill="#1c1c1c" stroke="#d2d5d6" stroke-width="1">
        <path d="M693 560 l4 5 h-3 v3 h-2 v-3 h-3 z M693 581 l4 -5 h-3 v-3 h-2 v3 h-3 z M683 570 l6 -4 v3 h2 v2 h-2 v3 z M704 570 l-6 -4 v3 h-2 v2 h2 v3 z" />
      </g>
    </svg>`;
  }
}

const menus = [
  ["파일", "F"], ["편집", "E"], ["보기", "V"], ["카메라", "C"],
  ["그리기", "R"], ["도구", "T"], ["창", "W"], ["도움말", "H"],
];

const trays = ["요소 정보", "재질", "구성 요소", "스타일", "그림자", "가장자리 부드럽게", "레이어"];

@customElement("app-root")
class AppRoot extends LitElement {
  static styles = css`
    :host {
      display: flex; box-sizing: border-box; min-height: 100vh; padding: 26px 0 26px 6px;
      background: #1a1a1a; color: #1e1e1e;
      font: 16px/24px "Noto Sans CJK KR", "Noto Sans", sans-serif;
    }
    button { font: inherit; color: inherit; border: 0; padding: 0; background: none; }
    .window { flex: 1; min-width: 0; display: flex; flex-direction: column; background: #f3f3f3; }

    .title { display: flex; align-items: center; height: 28px; padding-left: 4px; background: #fff; }
    .title h1 { flex: 1; margin: 0 0 0 5px; font-size: 16px; line-height: 24px; font-weight: 400; }
    .logo { width: 18px; height: 20px; }
    .caption { width: 52px; height: 28px; margin-left: 7px; display: grid; place-items: center; }
    .caption svg { width: 14px; height: 14px; }

    .menus { display: flex; gap: 13px; box-sizing: border-box; height: 24px; padding: 1px 0 0 7px; background: #fff; font-size: 16px; line-height: 24px; }
    .menus button { display: block; height: 23px; line-height: 24px; white-space: nowrap; }

    .bars { display: flex; height: 48px; padding-left: 87px; }
    .bar { display: flex; align-items: center; padding: 2px 0 0 3px; border-right: 1px solid #bcbcbc; border-bottom: 1px solid #bcbcbc; }
    .bar:first-child { padding-left: 4px; }
    .bar:last-child { padding-left: 6px; }
    .grip { width: 2px; height: 42px; margin-right: 3px; background: repeating-linear-gradient(#c2c2c2 0 2px, transparent 2px 4px); }
    .set { display: flex; }
    .set + .set { border-left: 1px solid #888; margin-left: 3px; padding-left: 5px; }

    .work { flex: 1; min-height: 0; display: flex; }
    .palette { width: 88px; }
    .tools { margin-right: 1px; padding: 5px 1px 0 2px; border: solid #bcbcbc; border-width: 0 1px 1px 0; }
    .tools .strip { height: 2px; margin-bottom: 3px; background: repeating-linear-gradient(90deg, #c2c2c2 0 2px, transparent 2px 4px); }
    .group { display: grid; grid-template-columns: 42px 42px; padding-bottom: 2px; }
    .group + .group { padding-top: 5px; border-top: 1px solid #8c8c8c; }
    .group:last-child { padding-bottom: 0; }
    .stage { flex: 1; min-width: 0; display: grid; position: relative; border: solid; border-width: 2px 1px 2px 2px; border-color: #8a8a8a #fff #fff #8a8a8a; }

    .keys { position: absolute; right: 16px; bottom: 8px; width: 278px; display: flex; flex-direction: column; align-items: flex-start; gap: 27px; }
    .key { height: 45px; padding: 0 5px; border-radius: 4px; background: #969696; box-shadow: 0 0 5px 2px #bdbdbc; color: #fff; font: 700 29px/42px "DejaVu Sans", sans-serif; white-space: nowrap; }

    .tray { width: 290px; margin-left: 5px; background: #f7faff; overflow: hidden; }
    .trayhead { display: flex; align-items: center; box-sizing: border-box; height: 27px; padding: 0 0 1px 4px; margin-bottom: 2px; background: linear-gradient(#c7d2df, #dbe6f4); font-size: 15px; }
    .trayhead h2 { flex: 1; margin: 0; font: inherit; }
    .pin { width: 10px; height: 12px; margin-right: 7px; }
    .shut { width: 10px; height: 12px; background: #c4585c; }
    .shut svg, .pin svg { display: block; width: 10px; height: 12px; }
    .panel { display: flex; align-items: center; box-sizing: border-box; height: 23px; margin-bottom: 1px; border: solid #a9a9a9; border-width: 1px 0 1px 1px; background: linear-gradient(#f1f1f1, #b9b9b9); }
    .open { flex: 1; display: flex; align-items: center; gap: 9px; padding: 0 0 2px 10px; height: 21px; line-height: 21px; text-align: left; }
    .open svg { width: 8px; height: 10px; }
    .drop { box-sizing: border-box; width: 13px; height: 17px; border: solid #999; border-width: 1px 0 1px 1px; background: #e9e9e9; }
    .drop svg { display: block; width: 12px; height: 15px; }

    .status { display: flex; align-items: center; height: 30px; padding-left: 6px; font-size: 16px; }
    .status .badge { width: 20px; height: 20px; margin-right: 15px; }
    .status .badge:nth-of-type(3) { margin-right: 12px; }
    .status svg { display: block; width: 20px; height: 20px; }
    .rule { width: 1px; height: 14px; background: #8a8a8a; }
    .hint { flex: 1; margin: 0 0 0 10px; font-size: 17px; white-space: nowrap; overflow: hidden; }
    .status label { margin: 0 10px 0 11px; }
    .status input { box-sizing: border-box; width: 249px; height: 28px; align-self: flex-end; padding: 0 3px; border: solid #b9bccb; border-width: 1px 0 0 1px; border-radius: 0; background: #fff; font: 15px "Noto Sans", sans-serif; color: #1e1e1e; outline: 0; }
  `;

  render() {
    return html`<div class="window">
      <header class="title">
        <svg class="logo" viewBox="0 0 18 20" aria-hidden="true">
          <path d="M1 3 L12 1 L17 4 L16 16 L5 19 L2 14 Z" fill="#d9343c" />
          <path d="M1 3 L12 1 L17 4 L6 6 Z" fill="#ee7a7e" />
          <path d="M4 9 Q9 5 13 8 L12 10 Q9 8 6 10 M5 13 L11 11 L11 15 L7 16" fill="none" stroke="#fff" stroke-width="1.6" />
        </svg>
        <h1>제목 없음 - SketchUp Make 2017</h1>
        <button class="caption" aria-label="최소화"><svg viewBox="0 0 14 14"><path d="M1 6.500 H13" stroke="#111" /></svg></button>
        <button class="caption" aria-label="이전 크기로"><svg viewBox="0 0 14 14"><path d="M1.500 3.500 H10.500 V12.500 H1.500 Z M3.500 3.500 V1.500 H12.500 V10.500 H10.500" fill="none" stroke="#111" /></svg></button>
        <button class="caption" aria-label="닫기"><svg viewBox="0 0 14 14"><path d="M1 1 L13 13 M13 1 L1 13" stroke="#111" /></svg></button>
      </header>
      <nav class="menus">${menus.map(([n, k]) => html`<button>${n}(<u>${k}</u>)</button>`)}</nav>
      <div class="bars">${bars.map((bar) => html`<div class="bar" role="toolbar">
        <span class="grip"></span>
        ${bar.map((set) => html`<div class="set">${set.map((t) => html`<tool-button .tool=${t}></tool-button>`)}</div>`)}
      </div>`)}</div>
      <main class="work">
        <div class="palette"><div class="tools" role="toolbar">
          <div class="strip"></div>
          ${palette.map((g) => html`<div class="group">${g.map((t) => html`<tool-button .tool=${t}></tool-button>`)}</div>`)}
        </div></div>
        <section class="stage">
          <model-view></model-view>
          <div class="keys"><span class="key">&lt;LButtonDown&gt;</span><span class="key">&lt;LButtonUp&gt;</span></div>
        </section>
        <aside class="tray">
          <div class="trayhead">
            <h2>기본 트레이</h2>
            <button class="pin" aria-label="고정"><svg viewBox="0 0 10 12"><path d="M3 2 V7 M2 2 H7 M1 7.500 H8 M4.500 8 V11" stroke="#111" fill="none" /><path d="M6 2 V7" stroke="#111" stroke-width="2" /></svg></button>
            <button class="shut" aria-label="트레이 닫기"><svg viewBox="0 0 10 12"><path d="M3 3.500 L8 8.500 M8 3.500 L3 8.500" stroke="#fff" stroke-width="1.800" /></svg></button>
          </div>
          ${trays.map((name) => html`<div class="panel">
            <button class="open"><svg viewBox="0 0 8 10" aria-hidden="true"><path d="M0 0 L8 5 L0 10 Z" fill="#111" /></svg><span>${name}</span></button>
            <button class="drop" aria-label="${name} 닫기"><svg viewBox="0 0 12 15"><path d="M4 5.500 L9 10.500 M9 5.500 L4 10.500" stroke="#222" stroke-width="1.500" /></svg></button>
          </div>`)}
        </aside>
      </main>
      <footer class="status">
        <button class="badge" aria-label="위치"><svg viewBox="0 0 20 20"><circle cx="10" cy="10" r="8.500" fill="#f6f6f6" stroke="#a2a2a2" /><path d="M10 16 Q6 10 6 8 Q6 4 10 4 Q14 4 14 8 Q14 10 10 16 Z" fill="#a2a2a2" /></svg></button>
        <button class="badge" aria-label="저작자"><svg viewBox="0 0 20 20"><circle cx="10" cy="10" r="8.300" fill="#fff" stroke="#1a1a1a" stroke-width="1.500" /><circle cx="10" cy="5.500" r="1.700" fill="#1a1a1a" /><path d="M7.500 8 H12.500 V12 H11.300 V16 H8.700 V12 H7.500 Z" fill="#1a1a1a" /></svg></button>
        <button class="badge" aria-label="로그인"><svg viewBox="0 0 20 20"><circle cx="10" cy="10" r="8.500" fill="#eee" stroke="#a2a2a2" /><circle cx="10" cy="7.500" r="3.500" fill="#9c9c9c" /><path d="M4 15.500 Q5 11.500 10 11.500 Q15 11.500 16 15.500 Q10 20 4 15.500 Z" fill="#9c9c9c" /></svg></button>
        <span class="rule"></span>
        <p class="hint">이동할 두 점을 선택하십시오. Ctrl = 복사 토글, Alt = 자동 접기 토글, Shift를 누른 채로 선택 = 추정 잠금</p>
        <span class="rule"></span>
        <label for="measure">거리</label>
        <input id="measure" type="text" value="100mm" />
      </footer>
    </div>`;
  }
}
